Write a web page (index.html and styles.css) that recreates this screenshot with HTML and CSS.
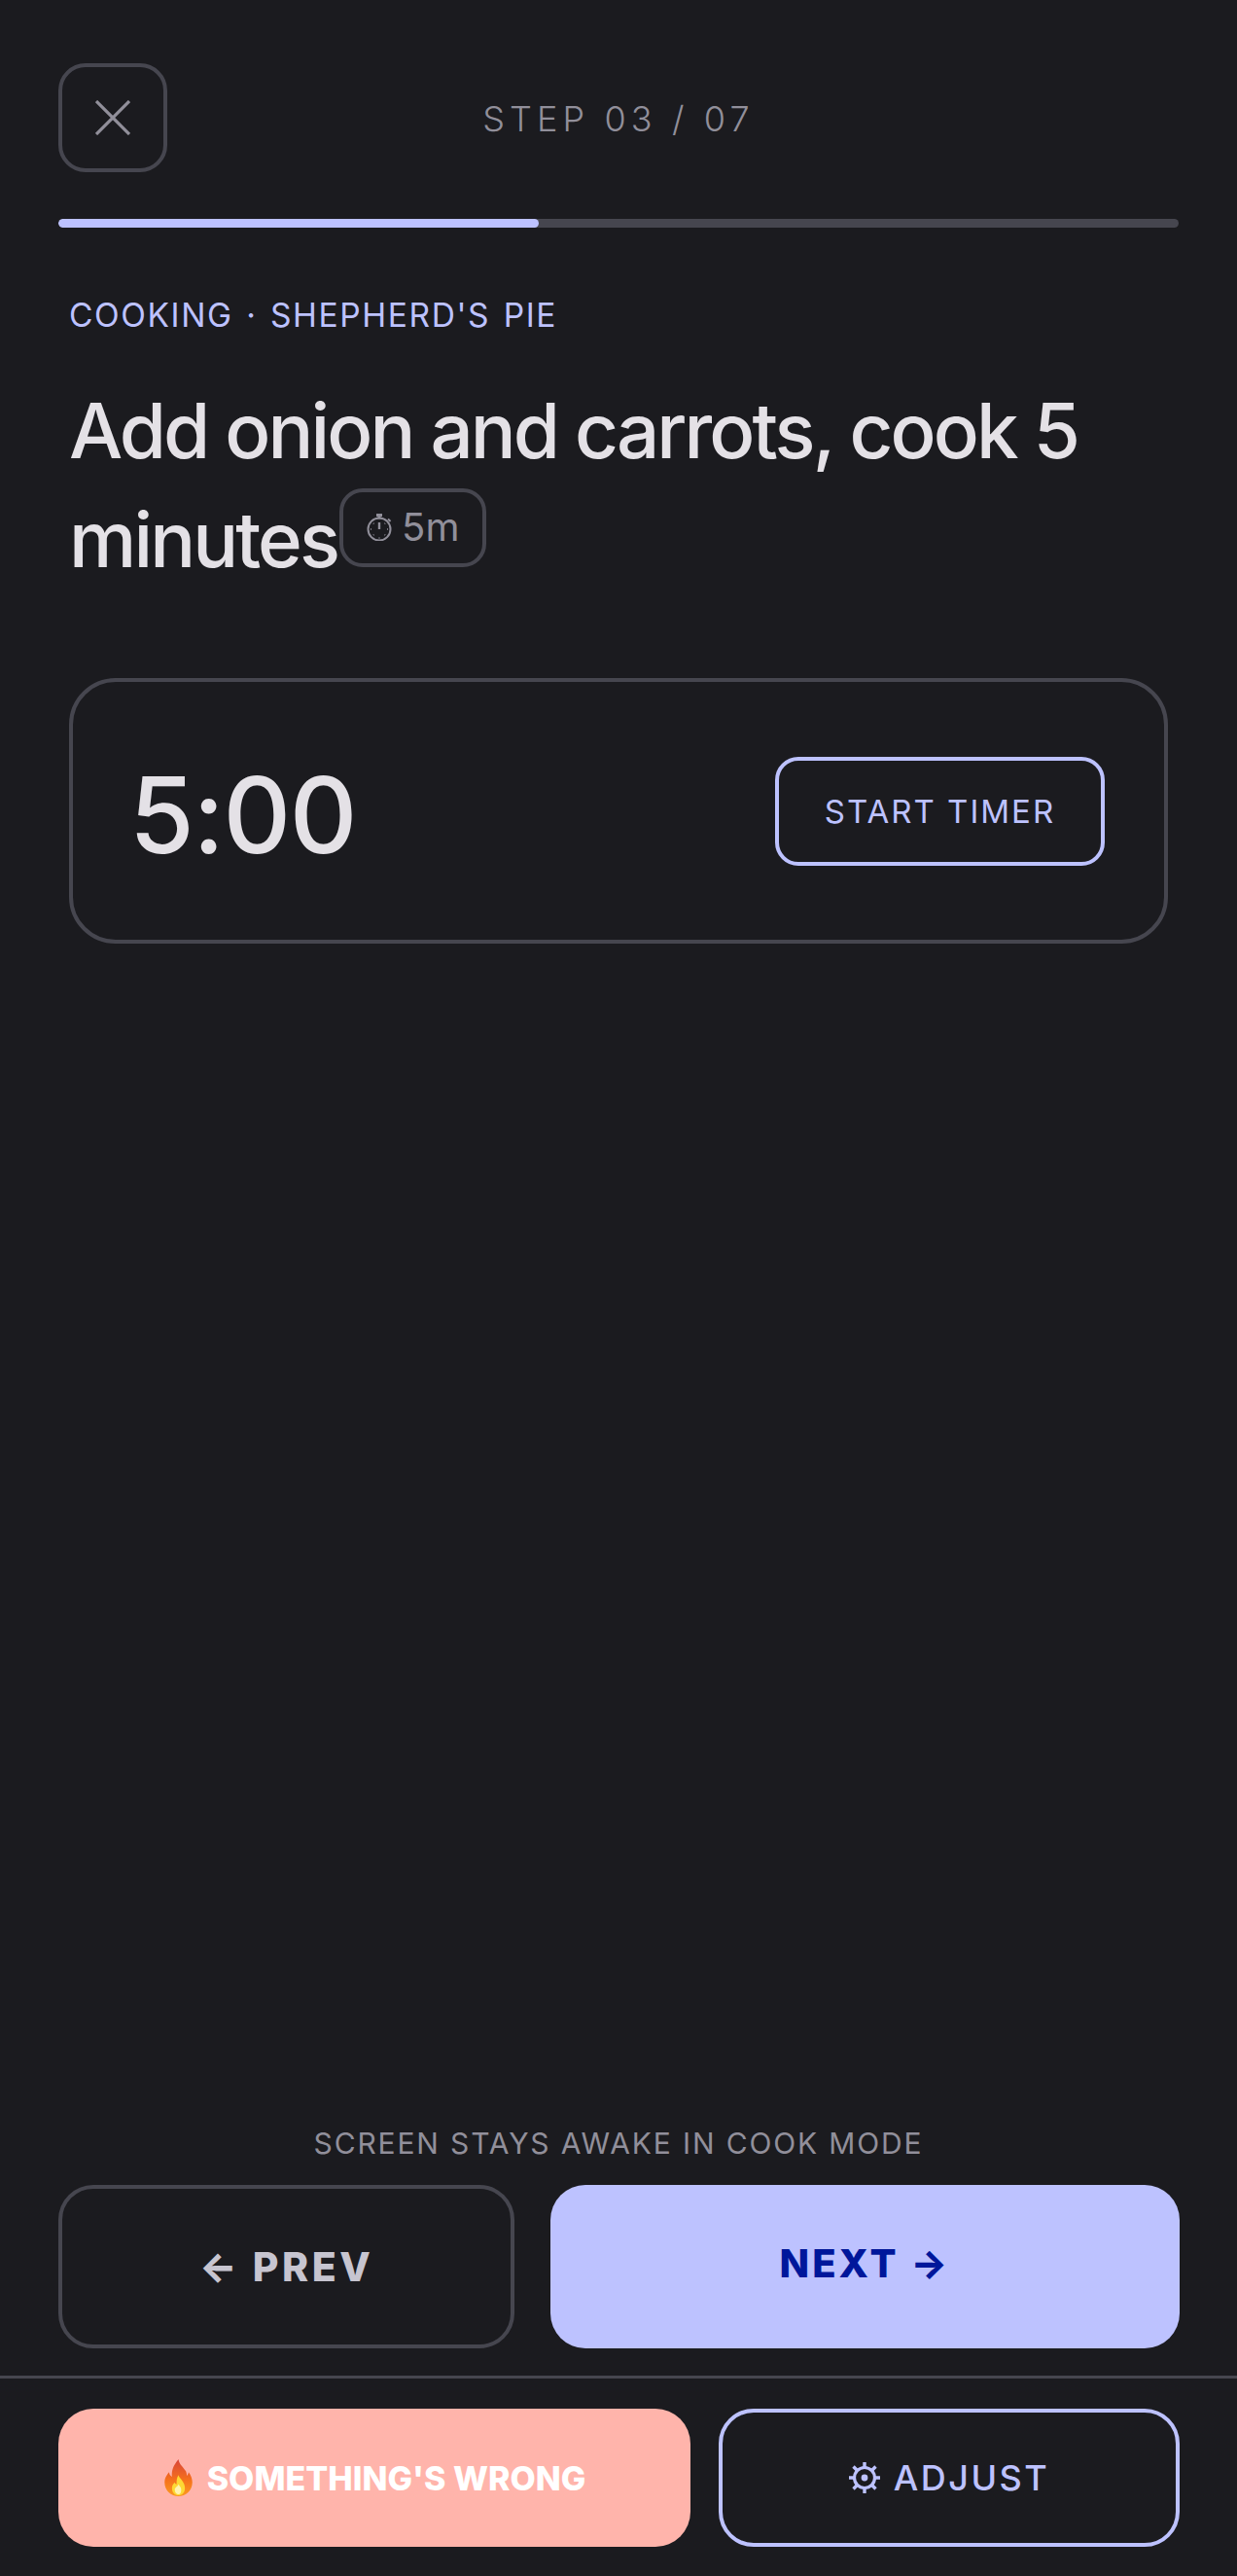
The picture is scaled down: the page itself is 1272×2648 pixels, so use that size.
FILE: index.html
```html
<!DOCTYPE html>
<html lang="en">
<head>
<meta charset="utf-8">
<title>Cook mode</title>
<link rel="stylesheet" href="styles.css">
</head>
<body>
<div class="screen">
  <header class="top">
    <button class="close" aria-label="Close">
      <svg class="close-icon" viewBox="0 0 36 36" fill="none"><path d="M1 1 35 35M35 1 1 35" stroke="currentColor" stroke-width="3.200"/></svg>
    </button>
    <div class="step">STEP 03 / 07</div>
    <div></div>
  </header>
  <div class="progress"><div class="progress-fill" style="width:42.86%"></div></div>
  <main class="main">
    <div class="eyebrow">COOKING · SHEPHERD'S PIE</div>
    <h1 class="title">Add onion and carrots, cook 5 minutes<span class="badge"><svg class="watch" viewBox="0 0 26 28" fill="none" stroke="currentColor"><path d="M10 1.500h6M13 1.500v4" stroke-width="3"/><circle cx="13" cy="16" r="11.500" stroke-width="2"/><path d="M13 9v7" stroke-width="2.400"/><path d="M22 5.500l2.500 2.500" stroke-width="2"/><path d="M13 24.500v1M5 16H4M22 16h-1M7.500 10.500l-.6-.6M18.500 10.500l.6-.6M7.500 21.500l-.6.6M18.500 21.500l.6.6" stroke-width="1.500"/></svg>5m</span></h1>
    <section class="timer">
      <div class="time">5:00</div>
      <button class="start">START TIMER</button>
    </section>
  </main>
  <footer class="footer">
    <div class="hint">SCREEN STAYS AWAKE IN COOK MODE</div>
    <div class="nav">
      <button class="prev">← PREV</button>
      <button class="next"><span class="next-label">NEXT →</span></button>
    </div>
    <div class="actions">
      <button class="wrong"><svg class="flame" viewBox="0 0 30 40"><defs><linearGradient id="fl" x1="0" y1="0" x2="0" y2="1"><stop offset="0" stop-color="#d8453a"/><stop offset=".55" stop-color="#f5701c"/><stop offset="1" stop-color="#fb9a1f"/></linearGradient></defs><path d="M15 0c1 6 5 8 8 13 1 2 1 4 1 5 1-1 2-3 2-4 3 4 4 8 4 11 0 9-7 15-15 15S0 34 0 25c0-5 3-9 5-11 0 2 1 4 3 5-1-8 3-14 7-19z" fill="url(#fl)"/><path d="M15 17c1 4 7 7 7 14 0 5-3 8-7 8s-7-3-7-8c0-3 2-5 3-6 0 1 1 2 2 2 0-4 0-7 2-10z" fill="#fdd835"/><path d="M15 27c1 2 3 3 3 6 0 3-1 5-3 5s-4-2-4-5c0-3 3-3 4-6z" fill="#fff3b0"/></svg><span>SOMETHING'S WRONG</span></button>
      <button class="adjust"><svg class="gear" viewBox="0 0 32 34" fill="none" stroke="currentColor"><circle cx="16" cy="17" r="10.500" stroke-width="3.200"/><circle cx="16" cy="17" r="3.400" fill="currentColor" stroke="none"/><path d="M16 1v5M16 28v5M0 17h5M27 17h5M4.500 5.500l3.500 3.500M24 25l3.500 3.500M27.500 5.500 24 9M8 25l-3.500 3.500" stroke-width="3.400"/></svg><span>ADJUST</span></button>
    </div>
  </footer>
</div>
</body>
</html>
```

FILE: styles.css
```css
* { box-sizing: border-box; }
html, body { margin: 0; padding: 0; background: #1b1b1f; }
body { font-family: Inter, "Liberation Sans", sans-serif; }
button { font-family: inherit; background: none; cursor: pointer; padding: 0; margin: 0; }

.screen { height: 2648px; display: flex; flex-direction: column; background: #1b1b1f; overflow: hidden; }

.top { display: grid; grid-template-columns: 112px 1fr 112px; align-items: center; padding: 65px 60px 0; }
.close { width: 112px; height: 112px; border: 4px solid #46464f; border-radius: 28px; color: #918f9a; display: flex; align-items: center; justify-content: center; }
.close-icon { width: 36px; height: 36px; }
.step { text-align: center; font-size: 36px; letter-spacing: 5.100px; color: #918f9a; font-weight: 300; padding-top: 2px; }

.progress { height: 9px; margin: 48px 60px 0; background: #46464f; border-radius: 5px; overflow: hidden; }
.progress-fill { height: 100%; background: #bdc2ff; border-radius: 5px; }

.main { flex: 1; padding: 0 71px; }
.eyebrow { margin-top: 70px; font-size: 33.500px; line-height: 40px; letter-spacing: 1.600px; word-spacing: 2.500px; color: #bdc2ff; font-weight: 400; }
.title { margin: 43px 0 0; font-size: 78px; line-height: 112px; font-weight: 500; letter-spacing: -2.900px; color: #e4e1e6; }
.badge { display: inline-flex; align-items: center; gap: 10px; height: 81px; padding: 0 24px; margin-left: 2px; border: 4px solid #46464f; border-radius: 24px; font-size: 40px; line-height: 1; font-weight: 400; letter-spacing: 0; color: #918f9a; vertical-align: 27px; }
.watch { width: 26px; height: 28px; }

.timer { margin-top: 86px; height: 273px; border: 4px solid #46464f; border-radius: 48px; display: flex; align-items: center; justify-content: space-between; padding: 0 61px 0 58px; }
.time { font-size: 108px; line-height: 1; font-weight: 500; color: #e4e1e6; letter-spacing: -1.500px; padding-top: 8px; }
.start { width: 339px; height: 112px; border: 4px solid #bdc2ff; border-radius: 24px; color: #bdc2ff; font-size: 33px; letter-spacing: 2px; font-weight: 400; }

.footer { display: flex; flex-direction: column; }
.hint { text-align: center; font-size: 30px; line-height: 36px; letter-spacing: 1.850px; color: #918f9a; font-weight: 400; }
.nav { display: flex; gap: 37px; padding: 25px 59px 0 60px; }
.prev { width: 469px; height: 168px; border: 4px solid #46464f; border-radius: 36px; color: #c7c5d0; font-size: 41px; font-weight: 800; letter-spacing: 3.500px; }
.next { flex: 1; height: 168px; border: 0; border-radius: 36px; background: #bdc2ff; color: #00179b; font-size: 40px; font-weight: 800; letter-spacing: 3px; padding-bottom: 8px; }
.actions { margin-top: 28px; border-top: 3px solid #46464f; padding: 31px 59px 30px 60px; display: flex; gap: 29px; }
.wrong, .adjust { height: 142px; border-radius: 36px; display: flex; align-items: center; justify-content: center; }
.wrong { width: 650px; border: 0; background: #ffb4ab; color: #fff; font-size: 34px; letter-spacing: 0; font-weight: 800; gap: 14px; }
.flame { width: 31px; height: 38px; }
.adjust { flex: 1; border: 4px solid #bdc2ff; color: #bdc2ff; font-size: 36px; letter-spacing: 2.500px; font-weight: 500; gap: 14px; }
.gear { width: 32px; height: 34px; }
```
